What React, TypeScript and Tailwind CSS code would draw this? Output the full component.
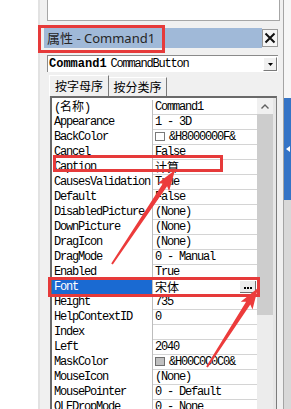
import React from "react";

type Row = { n: string; v?: string; cjkName?: boolean; cjkVal?: boolean; swatch?: "white" | "gray"; hi?: boolean };

const rows: Row[] = [
  { n: "(名称)", v: "Command1", cjkName: true },
  { n: "Appearance", v: "1 - 3D" },
  { n: "BackColor", v: "&H8000000F&", swatch: "white" },
  { n: "Cancel", v: "False" },
  { n: "Caption", v: "计算", cjkVal: true },
  { n: "CausesValidation", v: "True" },
  { n: "Default", v: "False" },
  { n: "DisabledPicture", v: "(None)" },
  { n: "DownPicture", v: "(None)" },
  { n: "DragIcon", v: "(None)" },
  { n: "DragMode", v: "0 - Manual" },
  { n: "Enabled", v: "True" },
  { n: "Font", v: "宋体", cjkVal: true, hi: true },
  { n: "Height", v: "735" },
  { n: "HelpContextID", v: "0" },
  { n: "Index", v: "" },
  { n: "Left", v: "2040" },
  { n: "MaskColor", v: "&H00C0C0C0&", swatch: "gray" },
  { n: "MouseIcon", v: "(None)" },
  { n: "MousePointer", v: "0 - Default" },
  { n: "OLEDropMode", v: "0 - None" },
];

function arrowPoints(tx: number, ty: number, px: number, py: number, wt: number, ws: number, hl: number, hw: number) {
  const dx = px - tx;
  const dy = py - ty;
  const len = Math.sqrt(dx * dx + dy * dy);
  const ux = dx / len;
  const uy = dy / len;
  const nx = -uy;
  const ny = ux;
  const bx = px - ux * hl;
  const by = py - uy * hl;
  const bbx = px - ux * (hl + 3);
  const bby = py - uy * (hl + 3);
  const pts = [
    [tx + (nx * wt) / 2, ty + (ny * wt) / 2],
    [bx + (nx * ws) / 2, by + (ny * ws) / 2],
    [bbx + (nx * hw) / 2, bby + (ny * hw) / 2],
    [px, py],
    [bbx - (nx * hw) / 2, bby - (ny * hw) / 2],
    [bx - (nx * ws) / 2, by - (ny * ws) / 2],
    [tx - (nx * wt) / 2, ty - (ny * wt) / 2],
  ];
  return pts.map((p) => `${p[0].toFixed(1)},${p[1].toFixed(1)}`).join(" ");
}

export default function App() {
  return (
    <div className="relative flex h-[409px] w-[291px] overflow-hidden bg-white">
      <div className="w-[38px] shrink-0 bg-white" />
      <div className="flex h-[409px] w-[245px] shrink-0 flex-col border-l-2 border-[#e2e2e2] bg-[#f0f0f0]">
        {/* upper white box */}
        <div className="ml-[7px] h-[21px] w-[233px] shrink-0 border-x border-b border-[#a6a6a6] bg-white" />

        {/* title bar */}
        <div className="mt-[7px] flex h-[20px] shrink-0 items-start">
          <div className="ml-[4px] flex h-[20px] w-[218px] items-center bg-[#a0b9d8] pl-[3px] font-['Noto_Sans','Noto_Sans_CJK_SC',sans-serif] text-[13px] leading-none text-[#262626]">
            属性 - Command1
          </div>
          <div className="mt-[1px] flex h-[18px] w-[16px] items-center justify-center border border-[#9a9a9a] bg-[#f6f6f6]">
            <svg width="12" height="12" viewBox="0 0 12 12">
              <path d="M1.5 1.5 L10.5 10.5 M10.5 1.5 L1.5 10.5" stroke="#111" strokeWidth="2" />
            </svg>
          </div>
        </div>

        {/* combo */}
        <div className="ml-[7px] mt-[7px] flex h-[17px] w-[231px] shrink-0 border-l border-t border-[#8a8a8a] bg-white">
          <div className="flex flex-1 items-center pl-[1px] font-['Liberation_Mono',monospace] text-[12px] leading-none text-black">
            <span className="font-bold">Command1</span>
            <span className="ml-[4px] tracking-[-1.2px]">CommandButton</span>
          </div>
          <div className="mb-[1px] mr-[1px] mt-[1px] flex w-[14px] items-center justify-center border-b border-r border-l border-t border-b-[#7a7a7a] border-l-white border-r-[#7a7a7a] border-t-white bg-[#f0f0f0]">
            <svg width="5" height="3" viewBox="0 0 5 3">
              <path d="M0 0 L5 0 L2.5 3 Z" fill="#000" />
            </svg>
          </div>
        </div>

        {/* tabs */}
        <div className="ml-[9px] mt-[3px] flex h-[21px] shrink-0 items-end font-['Noto_Sans_CJK_SC',sans-serif] text-[12px] leading-none text-black">
          <div className="flex h-[21px] w-[60px] items-center justify-center border-l border-t border-r border-l-white border-t-white border-r-[#7a7a7a] bg-[#f0f0f0]">
            按字母序
          </div>
          <div className="flex h-[19px] w-[58px] items-center justify-center border-t border-r border-t-white border-r-[#7a7a7a] bg-[#f0f0f0]">
            按分类序
          </div>
        </div>

        {/* grid */}
        <div className="ml-[10px] flex w-[227px] flex-1 border-l-2 border-r border-t-2 border-l-[#6a6a6a] border-r-[#7c7c7c] border-t-[#6a6a6a] bg-white">
          <div className="flex w-[205px] flex-col pt-[2px] font-['Liberation_Mono',monospace] text-[12px] leading-none text-black">
            {rows.map((r) => (
              <div key={r.n} className="flex h-[15px] shrink-0">
                <div
                  className={`flex w-[101px] items-center border-r border-[#bdbdbd] pb-[2px] pl-[2px] ${
                    r.hi ? "bg-[#1a6ad2] text-white" : ""
                  }`}
                >
                  {r.cjkName ? (
                    <span className="font-['Liberation_Mono','Noto_Sans_CJK_SC',monospace]">
                      <span className="tracking-[-1.2px]">(</span>
                      <span className="font-['Noto_Sans_CJK_SC',sans-serif]">名称</span>
                      <span>)</span>
                    </span>
                  ) : (
                    <span className="tracking-[-1.2px]">{r.n}</span>
                  )}
                </div>
                <div className="flex w-[104px] items-center justify-between border-b border-[#d4d4d4] pb-[1px] pl-[2px]">
                  <div className="flex items-center">
                    {r.swatch === "white" && (
                      <span className="mr-[4px] inline-block h-[9px] w-[10px] border border-[#7a7a7a] bg-white" />
                    )}
                    {r.swatch === "gray" && (
                      <span className="mr-[4px] inline-block h-[9px] w-[10px] border border-[#6e6e6e] bg-[#c0c0c0]" />
                    )}
                    {r.cjkVal ? (
                      <span className="font-['Noto_Sans_CJK_SC',sans-serif] text-[12px]">{r.v}</span>
                    ) : (
                      <span className="tracking-[-1.2px]">{r.v}</span>
                    )}
                  </div>
                  {r.hi && (
                    <div className="mr-[1px] flex h-[12px] w-[16px] items-end justify-center border-b border-r border-b-[#707070] border-r-[#707070] bg-[#ececec] pb-[3px]">
                      <svg width="8" height="2" viewBox="0 0 8 2">
                        <rect x="0" y="0" width="2" height="2" fill="#000" />
                        <rect x="3" y="0" width="2" height="2" fill="#000" />
                        <rect x="6" y="0" width="2" height="2" fill="#000" />
                      </svg>
                    </div>
                  )}
                </div>
              </div>
            ))}
          </div>
          {/* scrollbar */}
          <div className="flex w-[16px] flex-col">
            <div className="flex h-[16px] items-center justify-center bg-[#f0f0f0]">
              <svg width="8" height="5" viewBox="0 0 8 5">
                <path d="M0.5 4.5 L4 1 L7.5 4.5" stroke="#606060" strokeWidth="1.4" fill="none" />
              </svg>
            </div>
            <div className="h-[201px] bg-[#cdcdcd]" />
            <div className="flex-1 bg-[#ececec]" />
          </div>
          <div className="w-[3px] bg-[#e6e6e6]" />
        </div>
      </div>
      <div className="w-[1px] shrink-0 bg-[#a4a4a4]" />
      <div className="flex w-[7px] shrink-0 flex-col">
        <div className="h-[98px] bg-[#f6f6f6]" />
        <div className="flex h-[102px] items-center bg-[#3574c6] pl-[2px]">
          <svg width="4" height="6" viewBox="0 0 4 6">
            <path d="M4 0 L0 3 L4 6 Z" fill="#ffffff" />
          </svg>
        </div>
        <div className="flex-1 bg-[#d8d8d8]" />
      </div>

      {/* red annotation boxes */}
      <div className="pointer-events-none absolute left-[38px] top-[25px] h-[28px] w-[127px] border-[3px] border-[#e63a3a]" />
      <div className="pointer-events-none absolute left-[53px] top-[155px] h-[17px] w-[170px] border-[3px] border-[#e63a3a]" />
      <div className="pointer-events-none absolute left-[48px] top-[277px] h-[20px] w-[212px] border-[3px] border-[#e63a3a]" />

      {/* red arrows */}
      <svg className="pointer-events-none absolute left-0 top-0" width="291" height="409" viewBox="0 0 291 409">
        <polygon points={arrowPoints(112, 264, 175, 170, 2, 5, 18, 14)} fill="#ec3b3b" />
        <polygon points={arrowPoints(207, 367, 258, 288, 2, 5, 18, 14)} fill="#ec3b3b" />
      </svg>
    </div>
  );
}
